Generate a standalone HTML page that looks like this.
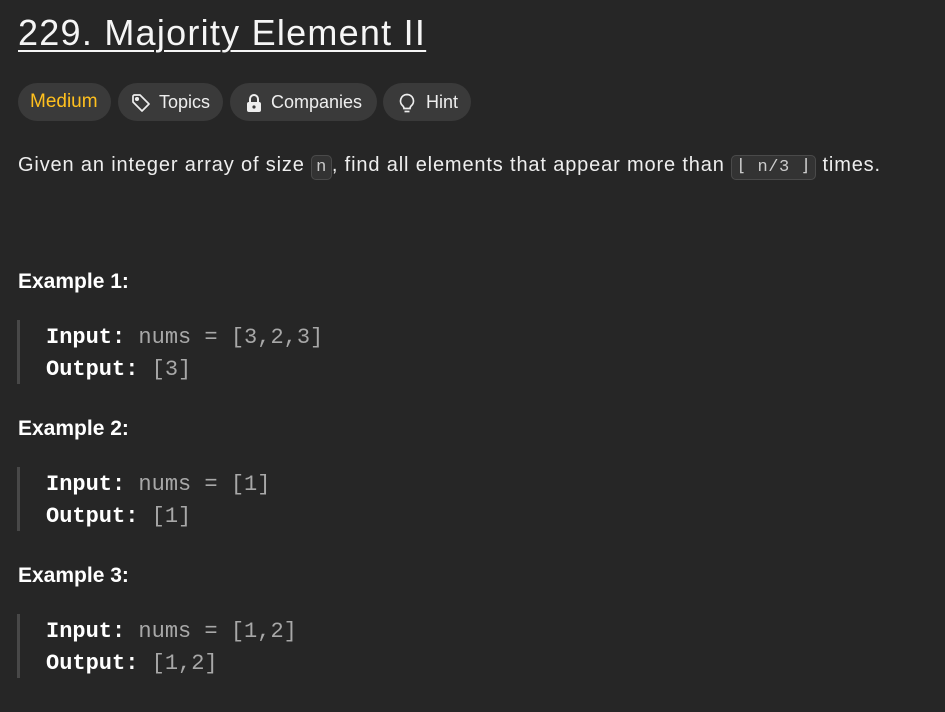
<!DOCTYPE html>
<html><head><meta charset="utf-8"><style>
body{margin:0;background:#262626;width:945px;height:712px;overflow:hidden;font-family:"Liberation Sans",sans-serif;color:#eff1f6;}
.t{position:absolute;left:18px;top:12px;font-size:36px;font-weight:500;color:#f5f5f5;text-decoration:underline;text-underline-offset:5px;text-decoration-thickness:2px;white-space:nowrap;letter-spacing:1.25px}
.pill{position:absolute;top:83px;height:38px;border-radius:19px;background:#3a3a3a;font-size:18px;line-height:38px;color:#eee;box-sizing:border-box;white-space:nowrap}
.pill svg{position:absolute;top:10px}
.p{position:absolute;left:18px;top:154px;font-size:20px;letter-spacing:0.85px;color:#eee;white-space:nowrap}
code{font-family:"Liberation Mono",monospace;font-size:17px;letter-spacing:0.5px;background:#333;border:1px solid #4a4a4a;border-radius:5px;padding:2px 4px;color:#ccc}
.h{position:absolute;left:18px;font-size:21px;font-weight:bold;color:#fff}
.bq{position:absolute;left:17px;width:3px;height:64px;background:#484848}
.pre{position:absolute;left:46px;font-family:"Liberation Mono",monospace;font-size:22px;line-height:32px;color:#a8a8a8;white-space:pre}
.pre b{color:#fff}
</style></head><body>
<div class="t">229. Majority Element II</div>
<div class="pill" style="left:18px;width:93px;padding-left:12px;color:#ffc01e;font-size:19px">Medium</div>
<div class="pill" style="left:118px;width:105px;padding-left:41px">
<svg style="left:13px" width="20" height="20" viewBox="0 0 20 20" fill="none" stroke="#eee" stroke-width="1.7"><path d="M2 3v6l9 9 7-7-9-9H3z" stroke-linejoin="round"/><circle cx="6" cy="6" r="1.2" fill="#eee"/></svg>Topics</div>
<div class="pill" style="left:230px;width:147px;padding-left:41px">
<svg style="left:15px" width="18" height="20" viewBox="0 0 18 20"><path d="M5 9V6a4 4 0 0 1 8 0v3" stroke="#eee" stroke-width="2" fill="none"/><rect x="2" y="9" width="14" height="10" rx="2" fill="#eee"/><circle cx="9" cy="14" r="1.6" fill="#3a3a3a"/></svg>Companies</div>
<div class="pill" style="left:383px;width:88px;padding-left:43px">
<svg style="left:15px" width="18" height="22" viewBox="0 0 18 22" fill="none" stroke="#eee" stroke-width="1.7"><path d="M9 1.5a6.5 6.5 0 0 0-4 11.6c.6.6 1 1.4 1 2.4h6c0-1 .4-1.8 1-2.4A6.5 6.5 0 0 0 9 1.5z"/><path d="M6.5 18.5h5"/></svg>Hint</div>
<div class="p">Given an integer array of size <code>n</code>, find all elements that appear more than <code>⌊ n/3 ⌋</code> times.</div>
<div class="h" style="top:270px">Example 1:</div>
<div class="bq" style="top:320px"></div>
<div class="pre" style="top:322px"><b>Input:</b> nums = [3,2,3]
<b>Output:</b> [3]</div>
<div class="h" style="top:417px">Example 2:</div>
<div class="bq" style="top:467px"></div>
<div class="pre" style="top:469px"><b>Input:</b> nums = [1]
<b>Output:</b> [1]</div>
<div class="h" style="top:564px">Example 3:</div>
<div class="bq" style="top:614px"></div>
<div class="pre" style="top:616px"><b>Input:</b> nums = [1,2]
<b>Output:</b> [1,2]</div>
</body></html>
